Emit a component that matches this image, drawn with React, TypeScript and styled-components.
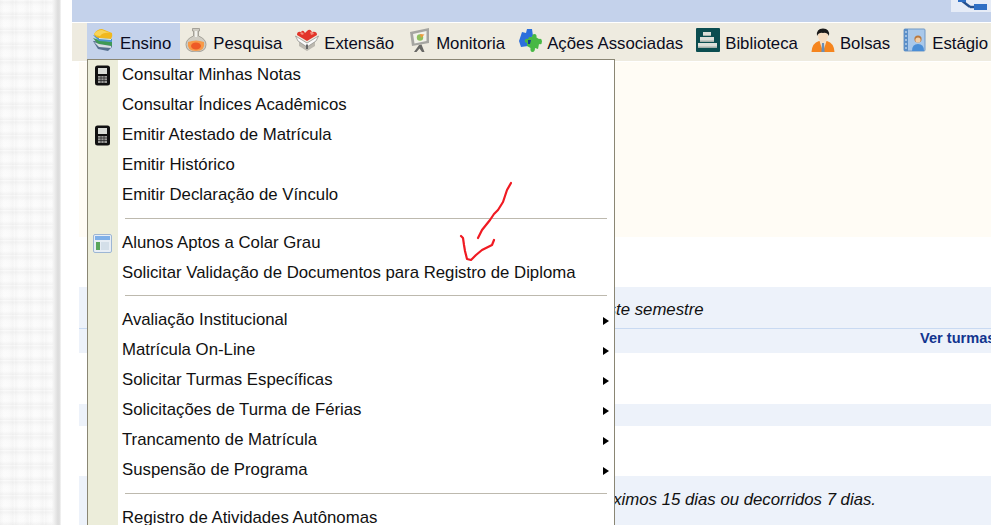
import React from "react";
import styled, { createGlobalStyle } from "styled-components";

const Global = createGlobalStyle`
  html, body { margin: 0; padding: 0; background: #fff; height: 100%; overflow: hidden; }
  #root { height: 100%; }
`;

const Page = styled.div`
  position: relative;
  display: flex;
  width: 991px;
  height: 525px;
  overflow: hidden;
  background: #fff;
  font-family: "Liberation Sans", Arial, sans-serif;
`;

const Backdrop = styled.div`
  flex: 0 0 61px;
  margin-right: 11px;
  background-color: #fff;
  background-image:
    linear-gradient(90deg, transparent 52px, #f0f0f0 54px, #dcdcdc 58px, #e2e2e2 60px, #fbfbfb 61px),
    repeating-linear-gradient(90deg, #f7f7f7 0, #fdfdfd 4px, #fcfcfc 9px, #f7f7f7 13px, #fdfdfd 15px),
    repeating-linear-gradient(0deg, #f5f5f5 0, #fefefe 4px, #fdfdfd 9px, #f6f6f6 13px, #fefefe 15px);
  background-blend-mode: normal, multiply, normal;
`;

const Main = styled.div`
  flex: 1;
  min-width: 0;
  display: flex;
  flex-direction: column;
`;

const TopBanner = styled.div`
  height: 22px;
  flex: none;
  display: flex;
  justify-content: flex-end;
  align-items: flex-start;
  background: #c4d2eb;
`;

const TopChip = styled.div`
  width: 40px;
  height: 12px;
  background: #e6ecf7;
  overflow: hidden;
  display: flex;
  gap: 4px;
  padding-left: 6px;
  box-sizing: border-box;
`;

const MenuBar = styled.nav`
  flex: none;
  height: 38px;
  margin-top: 1px;
  padding-left: 15px;
  display: flex;
  align-items: flex-start;
  background: #eeebe0;
`;

const BarItem = styled.div<{ $active?: boolean }>`
  height: 36px;
  box-sizing: border-box;
  flex: none;
  display: flex;
  align-items: center;
  gap: 5px;
  padding: 6px 9px 0 4px;
  font-size: 16.77px;
  color: #0b0b20;
  white-space: nowrap;
  background: ${(p) => (p.$active ? "#c4d2eb" : "transparent")};
`;

const BarIcon = styled.svg`
  width: 24px;
  height: 24px;
  flex: none;
  margin-top: -8px;
`;

const Content = styled.div`
  flex: 1;
  padding-left: 7px;
  padding-top: 1px;
  display: flex;
  flex-direction: column;
  min-height: 0;
`;

const Notice = styled.div`
  height: 175px;
  flex: none;
  margin-bottom: 50px;
  background: #fffcf5;
`;

const Band = styled.div<{ $height: number; $after: number }>`
  height: ${(p) => p.$height}px;
  margin-bottom: ${(p) => p.$after}px;
  flex: none;
  background: #edf2fa;
  font-size: 16.77px;
  color: #111;
`;

const BandText = styled.div<{ $left: number; $height: number; $rule: number }>`
  height: ${(p) => p.$rule}px;
  line-height: ${(p) => p.$height}px;
  padding-left: ${(p) => p.$left}px;
  font-style: italic;
  white-space: nowrap;
`;

const BandLink = styled.div`
  border-top: 1px solid #c9daf2;
  height: 24px;
  line-height: 19px;
  padding-left: 841px;
  font-weight: bold;
  font-size: 14.6px;
  color: #12358f;
  white-space: nowrap;
`;

const Menu = styled.div`
  position: absolute;
  left: 87px;
  top: 59px;
  width: 526px;
  border: 1px solid #8a8674;
  border-bottom: none;
  background: #fff;
  background-image: linear-gradient(90deg, #ecedda 30px, transparent 30px);
  color: #111;
  font-size: 16.77px;
`;

const MenuRow = styled.div`
  position: relative;
  height: 30px;
  display: flex;
  align-items: center;
  padding-left: 34px;
  padding-bottom: 1px;
  box-sizing: border-box;
  white-space: nowrap;
`;

const RowIcon = styled.svg`
  position: absolute;
  left: 5px;
  top: 5px;
  width: 19px;
  height: 21px;
`;

const Caret = styled.span`
  position: absolute;
  right: 5px;
  top: 12px;
  width: 0;
  height: 0;
  border-left: 6px solid #000;
  border-top: 4.5px solid transparent;
  border-bottom: 4.5px solid transparent;
`;

const Divider = styled.div<{ $height: number }>`
  height: ${(p) => p.$height}px;
  box-sizing: border-box;
  display: flex;
  align-items: flex-start;
  padding: ${(p) => p.$height - 10}px 7px 0 37px;
  &::after {
    content: "";
    flex: 1;
    height: 1px;
    background: #bdb9ae;
  }
`;

const Scribble = styled.svg`
  position: absolute;
  left: 450px;
  top: 175px;
  width: 70px;
  height: 95px;
  pointer-events: none;
`;

const Books = () => (
  <BarIcon viewBox="0 0 24 24">
    <path d="M2 13 L7 21 L17 23 L21 19 L20 14 Z" fill="#56708f" />
    <path d="M2 10 L7 16 L21 18 L21 14 L8 12 Z" fill="#3f9a55" />
    <path d="M3 14 L8 19 L20 20 L20 18 L8 16 Z" fill="#d8dfe4" />
    <path d="M2 7 L8 13 L21 14 L21 11 L9 9 Z" fill="#4a93c9" />
    <path d="M3 6 Q6 1 11 1 L21 5 Q22 8 20 11 L8 10 Q4 9 3 6 Z" fill="#f0b81e" />
    <path d="M3 6 Q6 2 11 2 L19 5 Q12 4 9 8 Q5 8 3 6Z" fill="#f8d458" />
    <path d="M8 10 L20 11 L20 12 L8 11Z" fill="#efeedd" />
  </BarIcon>
);
const Flask = () => (
  <BarIcon viewBox="0 0 24 24">
    <path d="M8.5 0.5 H15.5 V3 H14.5 V8 Q22 11 22 16.5 Q22 24 12 24 Q2 24 2 16.5 Q2 11 9.5 8 V3 H8.5 Z" fill="#cfccc3" stroke="#96938a" strokeWidth=".8" />
    <path d="M4 14 Q12 11 20 14 Q21.5 23 12 23 Q2.5 23 4 14 Z" fill="#f79a48" />
    <ellipse cx="12" cy="18" rx="5" ry="3.5" fill="#ee5a26" />
    <path d="M11 3 H13 V9 H11 Z" fill="#f1f1ec" />
  </BarIcon>
);
const House = () => (
  <BarIcon viewBox="0 0 24 24">
    <path d="M4 11 L12 15 L20 11 V18 L12 23 L4 18 Z" fill="#bcb9b0" />
    <path d="M0.5 8 L12 15 L23.5 8 L21 13 L12 19 L3 13 Z" fill="#fbfbfb" stroke="#8b8b85" strokeWidth=".7" />
    <path d="M2 7 Q2 3 6 4 Q8 1 10 5 L12 3 Q15 0 17 4 Q22 3 22 7 L12 13 Z" fill="#e2352a" />
    <path d="M5 5 Q7 3 9 6 L7 7 Z M15 4 Q18 3 19 6 L16 7 Z" fill="#f58b7c" />
    <path d="M11 16.5 H13 V21 H11 Z" fill="#666" />
  </BarIcon>
);
const Board = () => (
  <BarIcon viewBox="0 0 24 24">
    <path d="M3 4 L22 0 V15 L5 18 Z" fill="#a5a5a1" />
    <path d="M6 6 L19.5 3 V13 L7.5 15.5 Z" fill="#f2f2ea" />
    <circle cx="13" cy="9.5" r="3.2" fill="#8fc05e" />
    <path d="M13 6 L17.5 6.5 L14 10 Z" fill="#ee9a3e" />
    <path d="M12 17 L7 24 H9.5 L12.5 20.5 L15 24 H17.5 L14.5 16.5 Z" fill="#686866" />
  </BarIcon>
);
const Puzzle = () => (
  <BarIcon viewBox="0 0 24 24">
    <path d="M1 13 L4 4 L8 5 L9 1 H14 L15 8 L12 10 L10 18 L3 19 Z" fill="#2c6fdc" />
    <path d="M11 9 L14 9 Q14 6 16.5 6 Q19 6 18.5 9.5 L21 11 Q24 10 24 13.5 Q24 17 21 16 L20 21 L17 20 Q17 24 14.5 24 Q12 24 12.5 20 L9 18 L9 15 Q6 14 7 12 Q8 10 10 11 Z" fill="#48b845" />
    <path d="M10 12 L13 12 L12 16 L10 16 Z" fill="#123f8c" />
  </BarIcon>
);
const Library = () => (
  <BarIcon viewBox="0 0 24 24">
    <rect width="24" height="24" rx="1" fill="#0b4d50" />
    <path d="M7 4 H15 V8 H7 Z M4 9 H18 V14 H4 Z M2 15 H21 V20 H2 Z" fill="#dcdfd9" />
    <path d="M2 18.5 H21 V20 H2 Z M4 12.5 H18 V14 H4 Z M7 7 H15 V8 H7 Z" fill="#a4b0ab" />
  </BarIcon>
);
const Person = () => (
  <BarIcon viewBox="0 0 24 24">
    <path d="M0.5 24 Q1 15 8 13 H16 Q23 15 23.5 24 Z" fill="#f5851f" />
    <path d="M8.5 13 H15.5 L12 24 Z" fill="#f3e0c8" />
    <path d="M11 15 H13 L13.6 24 H10.4 Z" fill="#6a8fb8" />
    <ellipse cx="12" cy="8" rx="5" ry="6" fill="#f6dcc0" />
    <path d="M6 8 Q5 0.5 12 0.5 Q19 0.5 18 8 Q16 4 12 5 Q8 4 6 8 Z" fill="#1a1a1a" />
  </BarIcon>
);
const Notebook = () => (
  <BarIcon viewBox="0 0 24 24">
    <rect x="1" y="1" width="21" height="22" rx="1" fill="#a9c8ea" stroke="#7199c6" />
    <rect x="1" y="1" width="4" height="22" fill="#5b8fc8" />
    <path d="M2 4 H4 M2 8 H4 M2 12 H4 M2 16 H4 M2 20 H4" stroke="#e8f0f8" />
    <circle cx="15" cy="11" r="3.6" fill="#b9793f" />
    <circle cx="15" cy="12" r="2.6" fill="#f2cfa8" />
    <path d="M9 23 Q9 16 15 16 Q21 16 21 23 Z" fill="#4b8ed6" />
  </BarIcon>
);
const Calculator = () => (
  <RowIcon viewBox="0 0 19 21">
    <rect x="2" y="0.5" width="15" height="20" rx="2.5" fill="#111" />
    <rect x="5" y="3" width="9" height="6" fill="#d8dbd6" />
    <path d="M5 11 H14 V18 H5 Z" fill="#9a9a98" />
    <path d="M5 13 H14 M5 15.5 H14 M8 11 V18 M11 11 V18" stroke="#222" strokeWidth=".7" />
  </RowIcon>
);
const TableIcon = () => (
  <RowIcon viewBox="0 0 19 21">
    <rect x="0.5" y="1.5" width="18" height="18" rx="1.5" fill="#e8eef5" stroke="#9db6d4" />
    <rect x="2" y="3" width="15" height="4" fill="#7fb0e8" />
    <rect x="3" y="9" width="4" height="8" fill="#5aa65a" />
    <rect x="8" y="9" width="8" height="8" fill="#d4dfe9" />
  </RowIcon>
);
const Network = () => (
  <svg width="30" height="12" viewBox="0 0 30 12">
    <path d="M4 0 L13 7" stroke="#24508f" strokeWidth="2.4" fill="none" />
    <rect x="1" y="-4" width="8" height="6" fill="#2f6fc4" />
    <rect x="17" y="4" width="13" height="6" fill="#2f6fc4" />
    <path d="M13 7 H17" stroke="#24508f" strokeWidth="2.4" />
  </svg>
);

type Bar = { label: string; icon: React.ReactNode; active?: boolean };
const bars: Bar[] = [
  { label: "Ensino", icon: <Books />, active: true },
  { label: "Pesquisa", icon: <Flask /> },
  { label: "Extensão", icon: <House /> },
  { label: "Monitoria", icon: <Board /> },
  { label: "Ações Associadas", icon: <Puzzle /> },
  { label: "Biblioteca", icon: <Library /> },
  { label: "Bolsas", icon: <Person /> },
  { label: "Estágio", icon: <Notebook /> },
];

type Entry =
  | { sep: number }
  | { sep?: undefined; label: string; icon?: React.ReactNode; more?: boolean };

const entries: Entry[] = [
  { label: "Consultar Minhas Notas", icon: <Calculator /> },
  { label: "Consultar Índices Acadêmicos" },
  { label: "Emitir Atestado de Matrícula", icon: <Calculator /> },
  { label: "Emitir Histórico" },
  { label: "Emitir Declaração de Vínculo" },
  { sep: 18 },
  { label: "Alunos Aptos a Colar Grau", icon: <TableIcon /> },
  { label: "Solicitar Validação de Documentos para Registro de Diploma" },
  { sep: 17 },
  { label: "Avaliação Institucional", more: true },
  { label: "Matrícula On-Line", more: true },
  { label: "Solicitar Turmas Específicas", more: true },
  { label: "Solicitações de Turma de Férias", more: true },
  { label: "Trancamento de Matrícula", more: true },
  { label: "Suspensão de Programa", more: true },
  { sep: 18 },
  { label: "Registro de Atividades Autônomas" },
];

export default function App() {
  return (
    <Page>
      <Global />
      <Backdrop />
      <Main>
        <TopBanner>
          <TopChip>
            <Network />
          </TopChip>
        </TopBanner>
        <MenuBar>
          {bars.map((b) => (
            <BarItem key={b.label} $active={b.active}>
              {b.icon}
              {b.label}
            </BarItem>
          ))}
        </MenuBar>
        <Content>
          <Notice />
          <Band $height={66} $after={51}>
            <BandText $left={510} $height={46} $rule={41}>neste semestre</BandText>
            <BandLink>Ver turmas</BandLink>
          </Band>
          <Band $height={22} $after={50} />
          <Band $height={49} $after={0}>
            <BandText $left={510} $height={47} $rule={47}>próximos 15 dias ou decorridos 7 dias.</BandText>
          </Band>
        </Content>
      </Main>
      <Menu>
        {entries.map((e, i) =>
          e.sep !== undefined ? (
            <Divider key={i} $height={e.sep} />
          ) : (
            <MenuRow key={i}>
              {e.icon}
              {e.label}
              {e.more && <Caret />}
            </MenuRow>
          )
        )}
      </Menu>
      <Scribble viewBox="450 175 70 95">
        <path
          d="M511 183 L507 190 L505 196 L503 202 L498 210 L494 214 L490 220 L482 230 L478 238 M461 236 L463 238 L464 245 L465 251 L467 259 L471 260 L476 255 L482 250 L488 247 L492 245 L494 240"
          fill="none"
          stroke="#f01a22"
          strokeWidth="2.2"
          strokeLinecap="round"
          strokeLinejoin="round"
        />
      </Scribble>
    </Page>
  );
}
